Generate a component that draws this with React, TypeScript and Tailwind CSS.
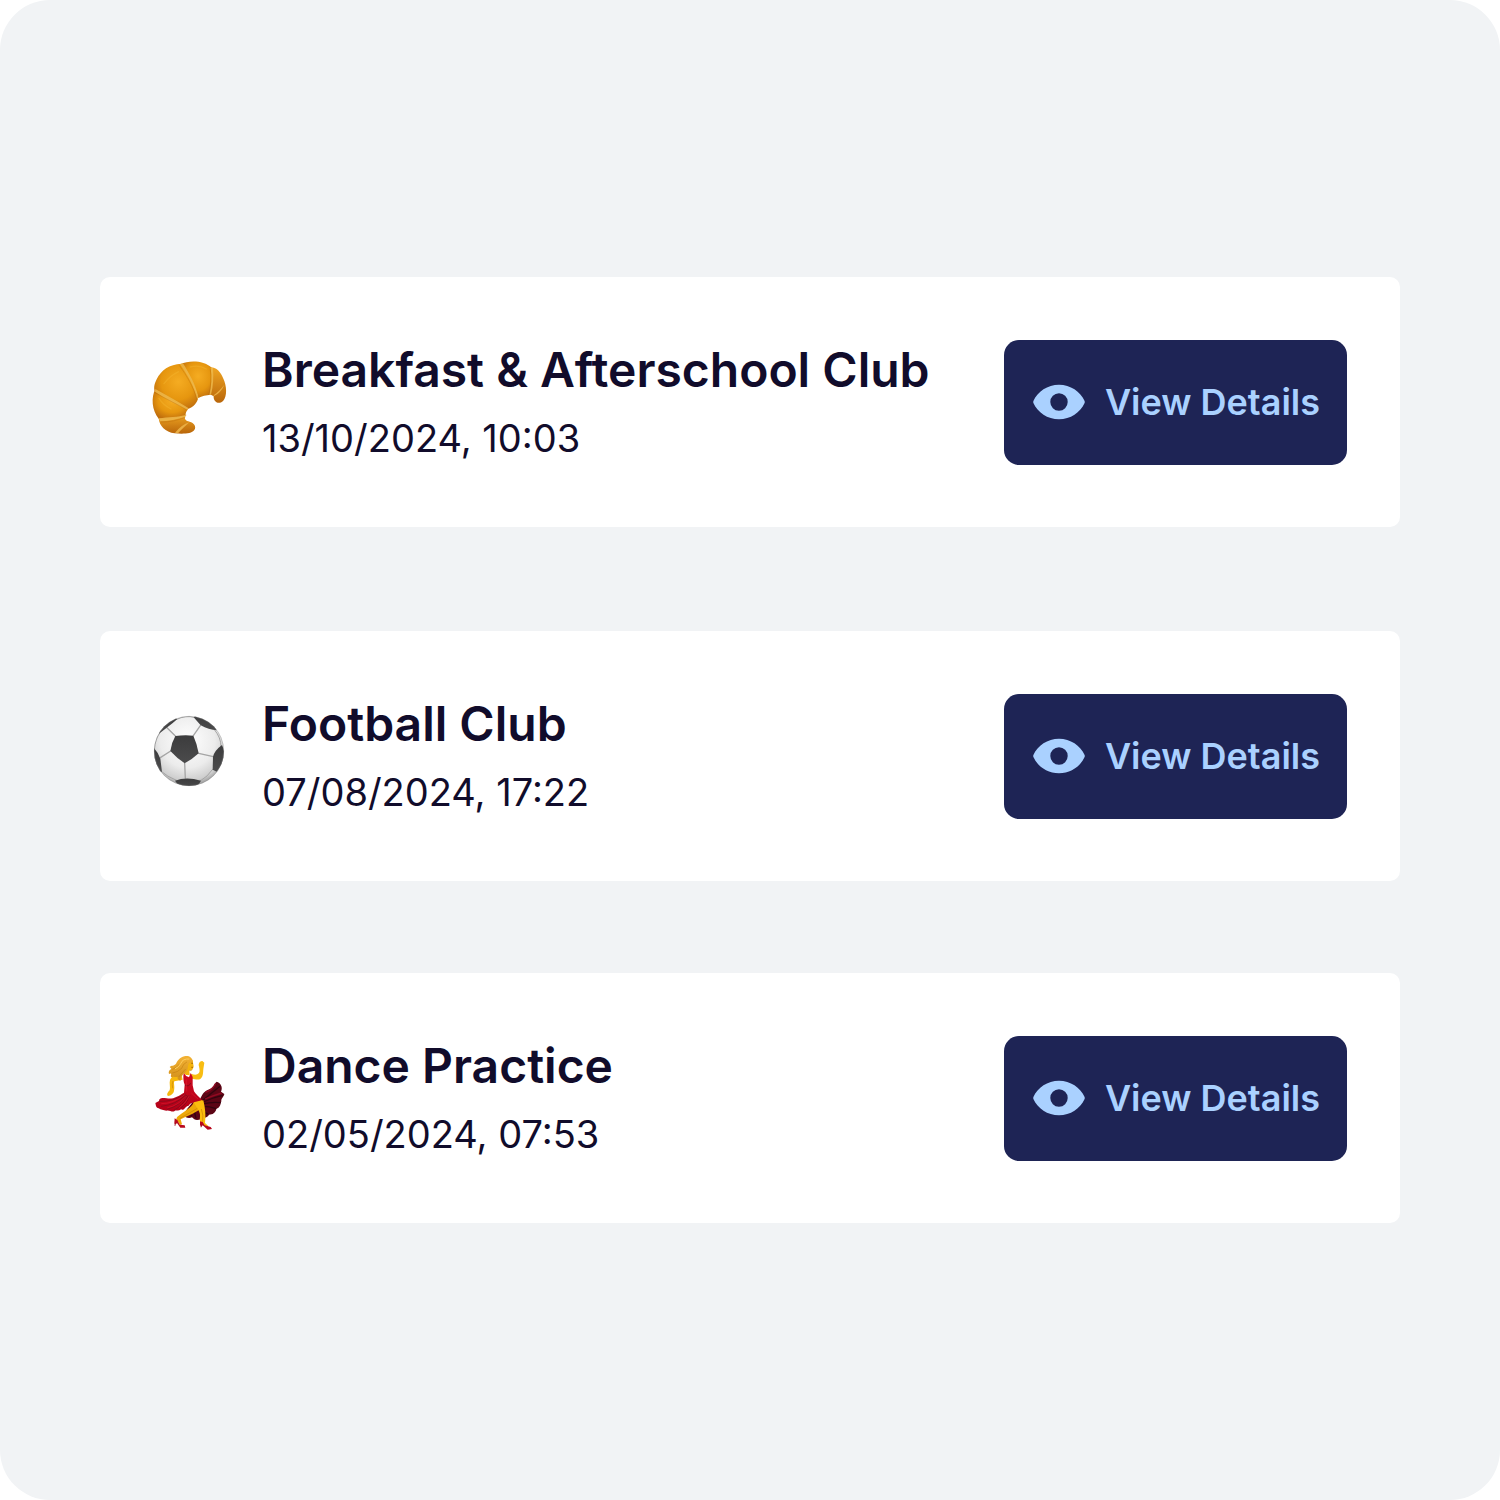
import type { ReactNode } from "react";

type Club = {
  name: string;
  date: string;
  icon: ReactNode;
};

function CroissantIcon() {
  return (
    <svg viewBox="30 21 240 270" className="w-20 shrink-0" aria-hidden="true">
      <defs>
        <radialGradient id="crust" cx="0.55" cy="0.4" r="0.65">
          <stop offset="0" stopColor="#f5ac22" />
          <stop offset="0.6" stopColor="#e6960f" />
          <stop offset="1" stopColor="#bf6d0d" />
        </radialGradient>
        <linearGradient id="crustEnd" x1="0" y1="0" x2="0" y2="1">
          <stop offset="0" stopColor="#efa522" />
          <stop offset="1" stopColor="#b9660a" />
        </linearGradient>
      </defs>
      {/* segments, from the lower tip round to the right tip */}
      <path d="M56 205C58 228 76 247 104 250C128 252 154 252 163 240C170 230 162 218 149 215C137 214 131 206 137 196L98 192Z" fill="url(#crustEnd)" />
      <path d="M46 117C33 142 35 180 56 206C84 207 112 204 137 197C136 190 139 184 144 177L100 140Z" fill="url(#crust)" />
      <path d="M124 41C88 43 63 60 50 88C42 103 40 119 46 126C80 142 110 157 143 177C160 171 173 158 175 140L150 80Z" fill="url(#crust)" />
      <path d="M122 42C145 32 189 29 216 54C219 80 217 107 212 134C198 136 186 137 175 144C164 105 143 73 122 42Z" fill="url(#crust)" />
      <path d="M213 52C237 54 246 76 253 93C262 118 260 149 244 157C229 163 220 151 221 139C217 136 214 134 210 134C216 107 217 80 213 52Z" fill="url(#crustEnd)" />
      {/* seams */}
      <g fill="#edb84c" opacity="0.85">
        <path d="M120 43L129 40C147 70 167 103 175 141L172 150C163 110 142 73 120 43Z" />
        <path d="M46 117C80 137 115 154 145 174L142 180C108 161 76 147 45 125Z" />
        <path d="M56 205C85 200 112 202 140 194L136 200C111 208 87 214 60 214Z" />
        <path d="M212 53L219 54C221 82 220 108 213 134L208 134C214 107 216 80 212 53Z" />
      </g>
      <path d="M105 248C119 232 132 221 148 217C136 228 124 239 114 250Z" fill="#e9ad43" />
      <path d="M221 136C233 127 244 116 252 105C248 119 236 132 221 139Z" fill="#e9ad43" />
      <g fill="none" stroke="#a95a08" strokeWidth="2" opacity="0.4">
        <path d="M118 46C140 77 160 110 171 149" />
        <path d="M45 128C77 146 109 161 142 180" />
        <path d="M62 216C88 217 113 211 136 202" />
        <path d="M211 58C214 83 213 108 207 134" />
      </g>
      <g fill="none" stroke="#fac13b" strokeWidth="4" opacity="0.3" strokeLinecap="round">
        <path d="M72 101C85 83 99 73 116 65" />
        <path d="M151 51C166 47 184 48 199 57" />
        <path d="M57 145C67 161 79 170 93 177" />
      </g>
    </svg>
  );
}

function FootballIcon() {
  return (
    <svg viewBox="30 33 240 270" className="w-20 shrink-0" aria-hidden="true">
      <defs>
        <radialGradient id="leather" cx="0.48" cy="0.35" r="0.65">
          <stop offset="0" stopColor="#ffffff" />
          <stop offset="0.6" stopColor="#ececec" />
          <stop offset="0.88" stopColor="#cecece" />
          <stop offset="1" stopColor="#999999" />
        </radialGradient>
        <linearGradient id="patch" x1="0" y1="0" x2="0" y2="1">
          <stop offset="0" stopColor="#3c3c3d" />
          <stop offset="1" stopColor="#4b4b4c" />
        </linearGradient>
        <clipPath id="ball">
          <circle cx="147" cy="153" r="105" />
        </clipPath>
      </defs>
      <circle cx="147" cy="153" r="105" fill="url(#leather)" />
      <g clipPath="url(#ball)">
        <g fill="none" stroke="#a5a5a5" strokeWidth="4" strokeLinecap="round">
          <path d="M106 108L81 83M160 107L181 77M176 160L220 170M134 190L136 235M92 153L61 173" />
          <path d="M110 58Q138 45 162 52M224 90Q243 113 243 139M218 208Q203 230 181 243M109 241Q80 229 65 215M43 148Q45 117 60 98" strokeWidth="3" />
        </g>
        <g fill="url(#patch)">
          <path d="M106 108Q134 104 160 107Q171 131 176 160Q157 178 134 190Q111 175 91 153Q94 129 106 108Z" />
          <path d="M57 101Q61 65 100 50L112 57Q98 70 82 82Z" />
          <path d="M161 52L170 42Q213 52 231 91Q206 89 182 76Z" />
          <path d="M246 135Q224 151 219 170L218 209L230 215Q265 175 246 135Z" />
          <path d="M42 144Q56 160 61 176L66 216L54 213Q31 177 42 144Z" />
          <path d="M105 242Q139 229 183 242Q172 266 143 263Q116 262 105 242Z" />
        </g>
      </g>
      <circle cx="147" cy="153" r="104" fill="none" stroke="#858585" strokeWidth="2" opacity="0.5" />
    </svg>
  );
}

function DancerIcon() {
  return (
    <svg viewBox="30 24 240 270" className="w-20 shrink-0" aria-hidden="true">
      <defs>
        <linearGradient id="hair" x1="0" y1="0" x2="0" y2="1">
          <stop offset="0" stopColor="#f3b234" />
          <stop offset="1" stopColor="#d18f1b" />
        </linearGradient>
        <linearGradient id="dress" x1="0" y1="0" x2="0" y2="1">
          <stop offset="0" stopColor="#d00a20" />
          <stop offset="1" stopColor="#b10018" />
        </linearGradient>
      </defs>
      {/* inner side of the skirt */}
      <path d="M180 163C188 145 194 137 210 132C224 128 222 116 230 110C241 113 250 126 243 140L253 147C251 157 243 159 244 169C241 180 240 188 229 192C226 204 218 209 207 209C202 218 194 217 184 222C170 227 163 225 156 217C145 222 136 217 131 209L143 190L164 164Z" fill="#5c0515" />
      <g fill="none" stroke="#32040f" strokeWidth="4">
        <path d="M189 166Q215 144 240 124M190 171Q219 157 248 151M188 177Q215 170 242 173M185 184Q206 183 228 191M178 183Q187 201 204 207M158 191Q166 204 168 220M145 195Q149 207 156 213" />
      </g>
      <path d="M227 115Q217 135 196 142M245 144Q219 152 195 162" fill="none" stroke="#910a22" strokeWidth="4" />
      {/* legs */}
      <path d="M161 166C163 185 139 194 115 213C106 220 109 226 115 232L119 240L126 238L122 223C146 211 168 203 187 188L186 165Z" fill="#eda908" />
      <path d="M161 171C169 188 182 200 180 215C178 226 181 231 186 239L204 247L205 243L195 234C198 213 196 190 190 166Z" fill="#fbbd0d" />
      <path d="M120 220Q150 203 172 190M184 192Q191 210 188 230" fill="none" stroke="#ca8205" strokeWidth="2" />
      {/* shoes */}
      <path d="M104 220L112 225L119 239L134 241L136 248L121 248L111 234L106 239L103 234Z" fill="#b8091d" />
      <path d="M180 229L188 231L194 241L212 246L216 252L203 254L188 241L184 246L180 239Z" fill="#b8091d" />
      <path d="M105 234V243M183 239V247" stroke="#98091a" strokeWidth="2" />
      {/* arms and face */}
      <path d="M123 84C108 87 96 93 90 105C87 115 92 127 89 136C82 143 79 149 84 153C93 152 101 145 102 137C105 124 100 114 103 109L128 104Z" fill="#f6b80d" />
      <path d="M153 86C164 90 171 90 176 85C181 80 178 71 177 64C174 56 180 47 187 48L193 53L191 66C188 79 192 93 181 102C172 106 163 101 155 101Z" fill="#f8bd12" />
      <path d="M138 44C153 36 160 44 159 53L161 64C160 73 155 77 148 76L149 90L138 90L126 80Z" fill="#f5b40c" />
      <path d="M148 76Q152 78 157 74M99 108Q95 117 98 130" fill="none" stroke="#c9850a" strokeWidth="2" />
      <path d="M153 54L159 55M154 67L159 67" stroke="#7f4208" strokeWidth="2" />
      {/* bodice and skirt */}
      <path d="M131 83Q136 93 147 97L152 84L158 96L158 121L162 139C166 147 178 157 186 165C169 172 151 171 146 182C137 181 133 199 123 193C115 200 107 194 103 199C94 202 88 194 79 197C70 196 63 194 56 190C47 188 48 181 46 174L57 168C58 157 66 158 80 160C99 164 115 153 132 143L134 119C130 110 129 97 131 83Z" fill="url(#dress)" />
      <g fill="none" stroke="#8a0a1c" strokeWidth="3" strokeLinecap="round">
        <path d="M135 147Q101 171 58 169M137 150Q109 179 64 184M140 151Q119 183 82 193M144 152Q128 183 103 195M150 152Q139 177 124 189M136 121Q146 127 152 115" />
      </g>
      <g fill="none" stroke="#ec2338" strokeWidth="2" strokeLinecap="round" opacity="0.6">
        <path d="M139 104L140 138M134 149Q99 177 65 176M139 153Q115 182 83 188M149 153Q135 178 119 187M155 145L173 161" />
      </g>
      {/* hair */}
      <path d="M158 50C157 37 146 31 133 34C119 37 113 47 108 56C102 64 94 60 89 66C92 69 95 70 93 73C87 75 85 82 87 87C91 84 95 85 93 91C91 96 95 98 101 95C105 97 110 96 113 95C111 101 116 105 122 107C120 95 130 87 138 80C146 72 142 62 147 55C152 50 155 55 158 50Z" fill="url(#hair)" />
      <g fill="none" stroke="#bd770d" strokeWidth="2" strokeLinecap="round" opacity="0.75">
        <path d="M140 51Q129 56 125 70Q113 82 98 84M136 73Q124 85 117 95M118 58Q110 69 98 73" />
      </g>
      <path d="M147 42Q128 40 122 56Q116 67 106 71" fill="none" stroke="#ffcf60" strokeWidth="3" strokeLinecap="round" />
    </svg>
  );
}

function EyeIcon() {
  return (
    <svg viewBox="0 0 52 36" className="w-[52px] shrink-0" fill="currentColor" aria-hidden="true">
      <path
        fillRule="evenodd"
        d="M26 0.700C14.500 0.700 4.700 7.500 0.400 17Q0 18 0.400 19C4.700 28.500 14.500 35.300 26 35.300S47.300 28.500 51.600 19Q52 18 51.600 17C47.300 7.500 37.500 0.700 26 0.700ZM26 9.300A8.700 8.700 0 1 1 26 26.700A8.700 8.700 0 1 1 26 9.300Z"
      />
    </svg>
  );
}

const clubs: Club[] = [
  { name: "Breakfast & Afterschool Club", date: "13/10/2024, 10:03", icon: <CroissantIcon /> },
  { name: "Football Club", date: "07/08/2024, 17:22", icon: <FootballIcon /> },
  { name: "Dance Practice", date: "02/05/2024, 07:53", icon: <DancerIcon /> },
];

function ClubCard({ club }: { club: Club }) {
  return (
    <li className="flex items-center rounded-[10px] bg-white py-[57px] pr-[53px] pl-[50px] even:mt-[104px] even:mb-[92px]">
      {club.icon}
      <div className="ml-8 min-w-0 flex-1">
        <h2 className="text-[48px] leading-[72px] font-semibold">{club.name}</h2>
        <p className="text-[38px] leading-[64px]">{club.date}</p>
      </div>
      <button
        type="button"
        className="flex shrink-0 cursor-pointer items-center gap-5 rounded-[15px] bg-[#1e2455] py-[34px] pr-[27px] pl-[29px] text-[36px] leading-[57px] font-semibold text-[#aad1ff] hover:bg-[#293068]"
      >
        <EyeIcon />
        View Details
      </button>
    </li>
  );
}

export default function App() {
  return (
    <main className="flex min-h-screen flex-col justify-center rounded-[50px] bg-[#f1f3f5] px-[100px] font-['Inter',sans-serif] text-[#110c2b]">
      <ul className="flex flex-col">
        {clubs.map(club => (
          <ClubCard key={club.name} club={club} />
        ))}
      </ul>
    </main>
  );
}
